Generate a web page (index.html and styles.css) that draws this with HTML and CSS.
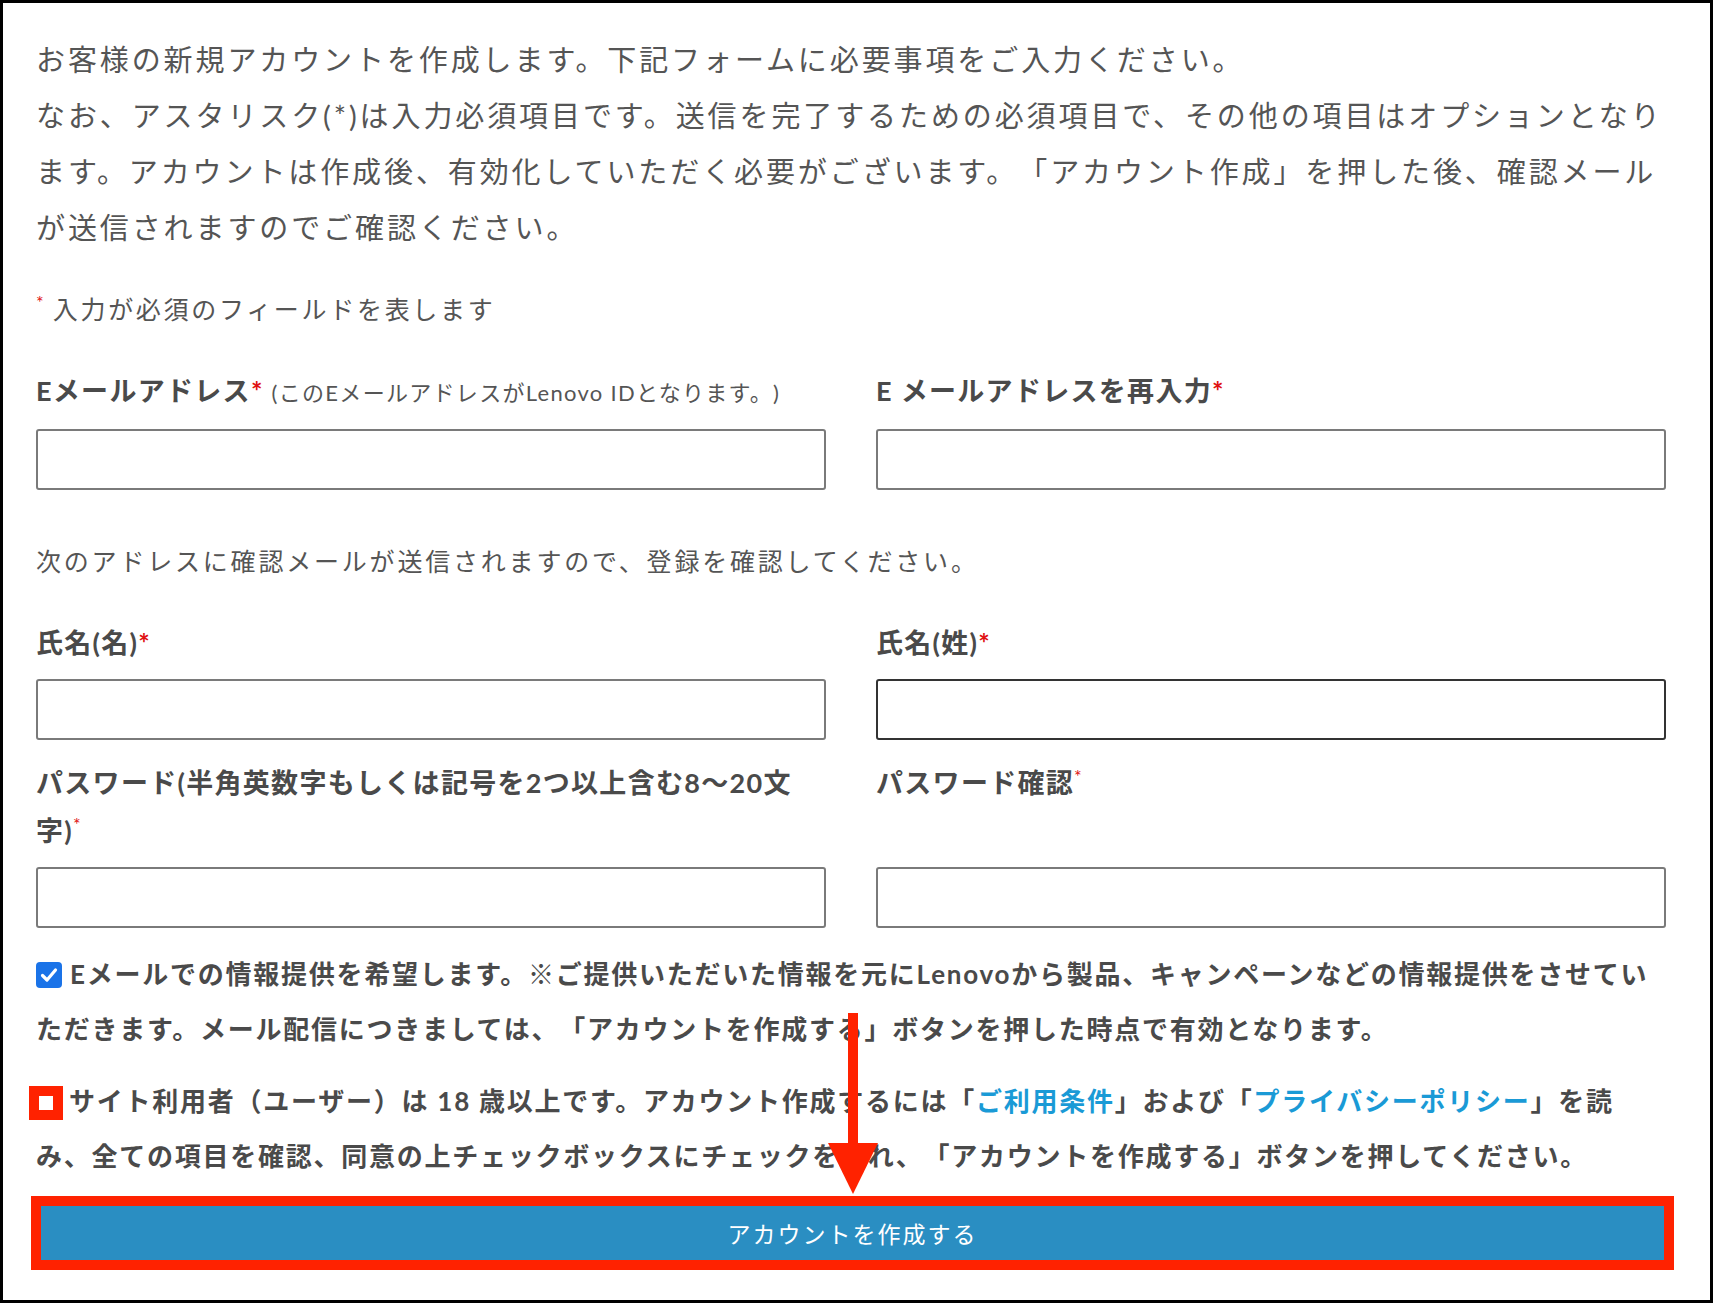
FILE: index.html
```html
<!DOCTYPE html>
<html lang="ja">
  <head>
    <meta charset="UTF-8" />
    <title>アカウント作成</title>
    <meta name="viewport" content="width=device-width, initial-scale=1" />
    <link rel="stylesheet" href="styles.css">
  </head>
  <body>
    <div class="page">
      <p class="intro">
        お客様の新規アカウントを作成します。下記フォームに必要事項をご入力ください。<br>
        なお、アスタリスク(*)は入力必須項目です。送信を完了するための必須項目で、その他の項目はオプションとなります。アカウントは作成後、有効化していただく必要がございます。「アカウント作成」を押した後、確認メールが送信されますのでご確認ください。
      </p>

      <p class="req-note"><sup class="req">*</sup> 入力が必須のフィールドを表します</p>

      <div class="row">
        <div class="field">
          <label class="label">Eメールアドレス<span class="req">*</span> <span class="hint">(このEメールアドレスがLenovo IDとなります。)</span></label>
          <input class="input" type="email">
        </div>
        <div class="field">
          <label class="label">E メールアドレスを再入力<span class="req">*</span></label>
          <input class="input" type="email">
        </div>
      </div>

      <p class="info">次のアドレスに確認メールが送信されますので、登録を確認してください。</p>

      <div class="row">
        <div class="field">
          <label class="label">氏名(名)<span class="req">*</span></label>
          <input class="input" type="text">
        </div>
        <div class="field">
          <label class="label">氏名(姓)<span class="req">*</span></label>
          <input class="input focused" type="text">
        </div>
      </div>

      <div class="row row-tight">
        <div class="field">
          <label class="label">パスワード(半角英数字もしくは記号を2つ以上含む8〜20文字)<sup class="req">*</sup></label>
          <input class="input" type="password">
        </div>
        <div class="field">
          <label class="label">パスワード確認<sup class="req">*</sup></label>
          <input class="input" type="password">
        </div>
      </div>

      <div class="check-row">
        <span class="box checked">
          <svg viewBox="0 0 26 26" width="26" height="26"><path d="M6.5 13.5l4.5 4.5 8.5-10" fill="none" stroke="#fff" stroke-width="3.2" stroke-linecap="round" stroke-linejoin="round"/></svg>
        </span>Eメールでの情報提供を希望します。※ご提供いただいた情報を元にLenovoから製品、キャンペーンなどの情報提供をさせていただきます。メール配信につきましては、「アカウントを作成する」ボタンを押した時点で有効となります。
      </div>

      <div class="check-row second">
        <span class="box marked"><span class="box-inner"></span></span>サイト利用者（ユーザー）は 18 歳以上です。アカウント作成するには「<a href="#" class="link">ご利用条件</a>」および「<a href="#" class="link">プライバシーポリシー</a>」を読み、全ての項目を確認、同意の上チェックボックスにチェックを入れ、「アカウントを作成する」ボタンを押してください。
      </div>

      <div class="submit-mark">
        <button class="submit" type="button">アカウントを作成する</button>
      </div>

      <svg class="arrow" viewBox="0 0 52 182" width="52" height="182">
        <rect x="21" y="0" width="10" height="132" fill="#ff2200"/>
        <polygon points="1,130 51,130 26,181" fill="#ff2200"/>
      </svg>
    </div>
  </body>
</html>
```

FILE: styles.css
```css
* {
  box-sizing: border-box;
}

body {
  margin: 0;
  font-family: "Lato", "Noto Sans CJK JP", sans-serif;
  color: #555;
  background: #fff;
  text-spacing-trim: space-all;
}

.page {
  position: relative;
  height: 1303px;
  border: 3px solid #000;
  padding: 29px 44px 0 33px;
}

.intro {
  margin: 0;
  font-size: 29px;
  line-height: 56px;
  letter-spacing: 2.9px;
  color: #555;
}

.req-note {
  margin: 29px 0 0;
  font-size: 25px;
  line-height: 48px;
  letter-spacing: 2.7px;
  color: #555;
}

.req {
  color: #e01010;
  font-weight: 700;
}

sup.req {
  font-size: 18px;
  font-weight: 400;
  vertical-align: 10px;
  line-height: 0;
  letter-spacing: 0;
}

.row {
  display: grid;
  grid-template-columns: 1fr 1fr;
  column-gap: 50px;
  margin-top: 34px;
}

.row-tight {
  margin-top: 19px;
}

.field {
  display: flex;
  flex-direction: column;
}

.label {
  flex: 1;
  font-size: 27px;
  line-height: 48px;
  font-weight: 700;
  letter-spacing: 1.3px;
  color: #4a4a4a;
  margin-bottom: 12px;
}

.label .hint {
  font-size: 22px;
  font-weight: 400;
  letter-spacing: 1.3px;
  color: #555;
}

.input {
  display: block;
  width: 100%;
  height: 61px;
  border: 2px solid #7a7a7a;
  border-radius: 3px;
  background: #fff;
  font-size: 22px;
  padding: 0 12px;
}

.input.focused {
  border-color: #333;
}

.info {
  margin: 47px 0 0;
  font-size: 25px;
  line-height: 48px;
  letter-spacing: 2.8px;
  color: #555;
}

.check-row {
  margin-top: 19px;
  font-size: 26px;
  line-height: 55px;
  font-weight: 700;
  letter-spacing: 1.75px;
  color: #4a4a4a;
}

.check-row.second {
  margin-top: 17px;
}

.box {
  display: inline-flex;
  align-items: center;
  justify-content: center;
  vertical-align: -4px;
  margin-right: 8px;
}

.box.checked {
  width: 26px;
  height: 26px;
  border-radius: 4px;
  background: #1a73e8;
}

.box.marked {
  width: 34px;
  height: 34px;
  background: #ff2200;
  margin-left: -7px;
  margin-right: 6px;
  vertical-align: 1px;
}

.box-inner {
  width: 14px;
  height: 14px;
  background: #fff;
}

.link {
  color: #1a9ad6;
  text-decoration: none;
}

.submit-mark {
  margin: 12px -8px 0 -5px;
  border: 10px solid #ff2200;
}

.submit {
  display: block;
  width: 100%;
  height: 54px;
  border: 0;
  background: #2a8ec2;
  color: #fff;
  font-family: "Lato", "Noto Sans CJK JP", sans-serif;
  font-size: 23px;
  letter-spacing: 2px;
  cursor: pointer;
}

.arrow {
  position: absolute;
  left: 824px;
  top: 1010px;
}
```
